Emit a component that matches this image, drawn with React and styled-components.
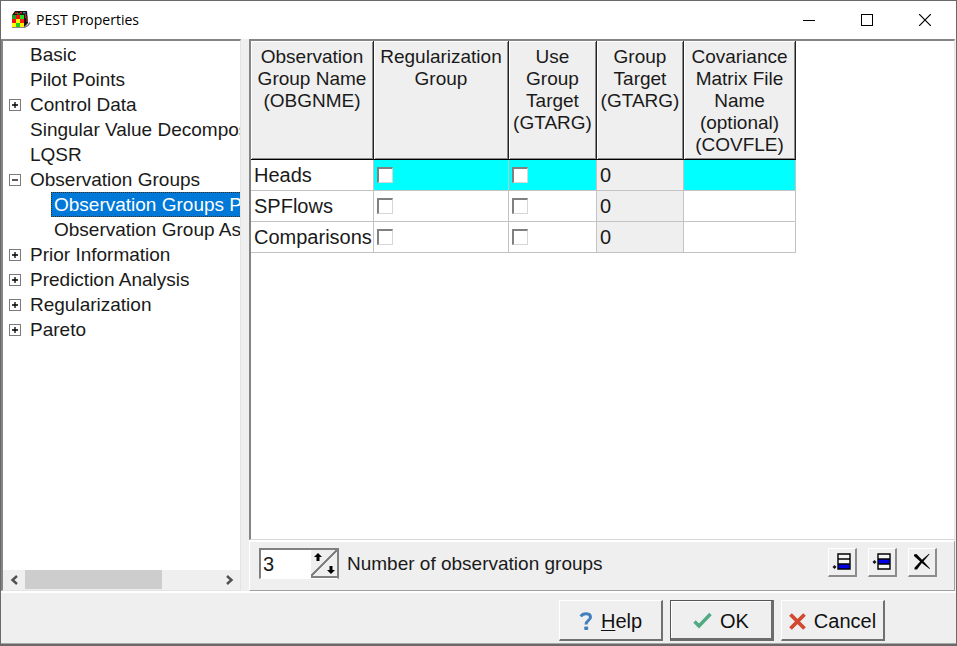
import React from "react";
import styled, { createGlobalStyle } from "styled-components";

const GlobalStyle = createGlobalStyle`
  * { box-sizing: border-box; }
  html, body, #root { height: 100%; margin: 0; }
  body {
    font-family: "Liberation Sans", Arial, sans-serif;
    font-size: 19px;
    color: #1a1a1a;
    background: #efefef;
  }
  button, input { font: inherit; color: inherit; margin: 0; }
  button { cursor: default; }
`;

const Window = styled.main`
  display: flex;
  flex-direction: column;
  height: 100%;
  border: 1px solid #6b6869;
  border-bottom-width: 2px;
  background: #efefef;
`;

const TitleBar = styled.header`
  display: flex;
  align-items: center;
  flex: none;
  height: 38px;
  padding: 0 2px 0 10px;
  background: #fff;
`;

const Title = styled.h1`
  flex: 1;
  margin: 0 0 0 5px;
  font: 400 14px/20px "Open Sans", "Noto Sans", sans-serif;
  color: #000;
`;

const CaptionButton = styled.button`
  display: flex;
  align-items: center;
  justify-content: center;
  width: 58px;
  height: 38px;
  padding: 0;
  border: 0;
  background: transparent;
`;

const Body = styled.div`
  display: grid;
  grid-template-columns: 240px minmax(0, 1fr);
  column-gap: 8px;
  flex: 1;
  min-height: 0;
  padding-right: 1px;
`;

const TreePane = styled.nav`
  display: flex;
  flex-direction: column;
  min-width: 0;
  border: solid;
  border-width: 2px 1px 1px 2px;
  border-color: #858585 #e3e3e3 #e3e3e3 #858585;
  background: #fff;
`;

const TreeList = styled.ul`
  flex: 1;
  margin: 0;
  padding: 1px 0 0;
  overflow: hidden;
  list-style: none;
`;

const TreeRow = styled.li`
  display: flex;
  align-items: center;
  height: 25px;
  padding-left: ${(p) => (p.$level ? 48 : 6)}px;
`;

const ExpanderSlot = styled.span`
  display: flex;
  flex: none;
  width: 18px;
`;

const Expander = styled.button`
  display: flex;
  width: 12px;
  height: 12px;
  padding: 0;
  border: 0;
  background: #fff;
`;

const TreeLink = styled.a`
  flex: ${(p) => (p.$selected ? "1 1 0" : "0 1 auto")};
  min-width: 0;
  height: 25px;
  padding: 0 0 0 2px;
  overflow: hidden;
  line-height: 23px;
  white-space: nowrap;
  text-decoration: none;
  color: ${(p) => (p.$selected ? "#fff" : "#1a1a1a")};
  background: ${(p) => (p.$selected ? "#0078d7" : "transparent")};
  border: 1px dotted ${(p) => (p.$selected ? "#442a10" : "transparent")};
  border-right: 0;
`;

const ScrollBar = styled.div`
  display: flex;
  flex: none;
  height: 20px;
  background: #efefef;
`;

const ScrollButton = styled.button`
  display: flex;
  align-items: center;
  justify-content: center;
  width: 22px;
  padding: 0;
  border: 0;
  background: transparent;
`;

const ScrollTrack = styled.div`
  flex: 1;
`;

const ScrollThumb = styled.div`
  width: 71%;
  height: 19px;
  background: #cdcdcd;
`;

const ContentPane = styled.section`
  display: flex;
  flex-direction: column;
  min-width: 0;
`;

const GridPane = styled.div`
  flex: 1;
  min-height: 0;
  overflow: hidden;
  border: solid;
  border-width: 2px 1px 1px 2px;
  border-color: #858585 #e3e3e3 #d8d8d8 #858585;
  background: #fff;
`;

const GroupTable = styled.table`
  width: 545px;
  table-layout: fixed;
  border-collapse: separate;
  border-spacing: 0;
`;

const Column = styled.col`
  width: ${(p) => p.$width}px;
`;

const HeaderCell = styled.th`
  height: 119px;
  padding: 5px 0 0;
  vertical-align: top;
  font-weight: 400;
  line-height: 22px;
  background: #efefef;
  border-right: 1px solid #222;
  border-bottom: 1px solid #000;
  box-shadow: inset 1px 1px #fff, inset -1px -1px #8a8a8a;
`;

const HeaderLine = styled.span`
  display: block;
  white-space: nowrap;
`;

const cellColor = (p) => (p.$readOnly ? "#efefef" : p.$active ? "#00ffff" : "#fff");

const Cell = styled.td`
  height: 31px;
  padding: 0 0 0 3px;
  font-size: 20px;
  line-height: 22px;
  text-align: left;
  background: ${cellColor};
  border-right: 1px solid #c3c3c3;
  border-bottom: 1px solid #c3c3c3;
`;

const CheckBox = styled.input`
  display: block;
  appearance: none;
  width: 16px;
  height: 16px;
  background: #fff;
  border: solid;
  border-width: 2px 1px 1px 2px;
  border-color: #808080 #d6d6d6 #d6d6d6 #808080;
`;

const CellInput = styled.input`
  display: block;
  width: 100%;
  padding: 0;
  border: 0;
  outline: 0;
  background: transparent;
`;

const CountBar = styled.div`
  display: flex;
  align-items: flex-start;
  flex: none;
  height: 51px;
  padding: 6px 17px 0 9px;
  border: solid;
  border-width: 2px 1px 1px 1px;
  border-color: #fff #a0a0a0 #a0a0a0 #fff;
`;

const SpinEdit = styled.div`
  display: flex;
  width: 80px;
  height: 31px;
  border: solid;
  border-width: 2px 2px 1px 2px;
  border-color: #808080 #808080 #fff #808080;
  background: #fff;
`;

const SpinInput = styled.input`
  flex: 1;
  min-width: 0;
  padding: 0 0 0 2px;
  font-size: 20px;
  border: 0;
  outline: 0;
  background: #fff;
`;

const SpinPad = styled.div`
  display: flex;
  flex-direction: column;
  width: 26px;
  border-bottom: 2px solid #808080;
  background: linear-gradient(to bottom right, #efefef 47%, #808080 48%, #808080 52%, #efefef 53%);
`;

const SpinButton = styled.button`
  display: flex;
  align-items: center;
  align-self: ${(p) => (p.$down ? "flex-end" : "flex-start")};
  justify-content: center;
  width: 13px;
  height: 13px;
  padding: 0;
  border: 0;
  background: transparent;
`;

const CountLabel = styled.label`
  flex: 1;
  margin-left: 8px;
  line-height: 32px;
`;

const ToolButtons = styled.div`
  display: flex;
  gap: 11px;
`;

const ToolButton = styled.button`
  display: flex;
  align-items: center;
  justify-content: center;
  width: 29px;
  height: 29px;
  padding: 0;
  background: #efefef;
  border: solid;
  border-width: 1px 2px 2px 1px;
  border-color: #fff #8c8c8c #8c8c8c #fff;
`;

const Footer = styled.footer`
  display: flex;
  justify-content: flex-end;
  flex: none;
  gap: 7px;
  height: 53px;
  padding: 7px 71px 0 0;
  border-top: 2px solid #fff;
  border-bottom: 1px solid #a8a8a8;
`;

const DialogButton = styled.button`
  display: flex;
  align-items: center;
  justify-content: center;
  gap: 8px;
  width: 104px;
  height: 41px;
  padding: 2px 0 0;
  font-size: 20px;
  line-height: 22px;
  color: #111;
  background: #efefef;
  border: solid;
  border-width: ${(p) => (p.$primary ? "1px 3px 3px 1px" : "1px 2px 2px 1px")};
  border-color: ${(p) => (p.$primary ? "#555 #6c6c6c #6c6c6c #555" : "#fff #707070 #707070 #fff")};
  box-shadow: ${(p) => (p.$primary ? "inset 1px 1px #fff" : "none")};
`;

const ButtonText = styled.span`
  white-space: pre;
`;

const Mnemonic = styled.span`
  text-decoration: underline;
  text-decoration-thickness: 1px;
  text-underline-offset: 2px;
`;

const AppIcon = () => (
  <svg width="20" height="18" viewBox="0 0 20 18" aria-hidden="true">
    <path d="M4 0H16L17 12L13 16.500H1V4z" fill="#1a1410" />
    <path d="M4 1.500h3v1.500H4zM9 1h2v1.500H9z" fill="#e02020" />
    <path d="M6 2.500h3v1H6z" fill="#22c522" />
    <path d="M12 1h2.500v1.500H12z" fill="#3088a8" />
    <path d="M1 4h4v4H1z" fill="#20a020" />
    <path d="M5 4h4v4H5z" fill="#f01010" />
    <path d="M9 4h4v4H9z" fill="#20e020" />
    <path d="M1 8h4v4H1z" fill="#f01010" />
    <path d="M5 8h4v4H5z" fill="#ffff00" />
    <path d="M9 8h4v4H9z" fill="#ff2010" />
    <path d="M1 12h4v4H1z" fill="#ffff00" />
    <path d="M5 12h4v4H5z" fill="#20d020" />
    <path d="M9 12h4v4H9z" fill="#ffee00" />
    <path d="M14 3h1v4h-1zM15.500 5h1v6h-1z" fill="#a33030" />
    <path d="M13 16.500L17 14.500L19 11.500" fill="none" stroke="#808080" strokeWidth="1.500" />
  </svg>
);

const MinimizeIcon = () => (
  <svg width="12" height="12" aria-hidden="true">
    <path d="M0 6.5H12" stroke="#000" />
  </svg>
);

const MaximizeIcon = () => (
  <svg width="12" height="12" aria-hidden="true">
    <rect x=".5" y=".5" width="11" height="11" fill="none" stroke="#000" />
  </svg>
);

const CloseIcon = () => (
  <svg width="12" height="12" aria-hidden="true">
    <path d="M0 0L12 12M12 0L0 12" stroke="#000" strokeWidth="1.2" />
  </svg>
);

const ExpanderIcon = ({ open }) => (
  <svg width="12" height="12" aria-hidden="true">
    <rect x=".5" y=".5" width="11" height="11" fill="#fff" stroke="#7b7b7b" />
    <path d={open ? "M3 6H9" : "M3 6H9M6 3V9"} stroke="#000" strokeWidth="1.3" />
  </svg>
);

const ChevronIcon = ({ right }) => (
  <svg width="9" height="10" aria-hidden="true">
    <path d={right ? "M2 1L6.5 5L2 9" : "M7 1L2.5 5L7 9"} fill="none" stroke="#505050" strokeWidth="2.4" />
  </svg>
);

const SpinArrow = ({ down }) => (
  <svg width="8" height="8" aria-hidden="true">
    <path d={down ? "M2.5 0h3v4H8L4 8L0 4h2.5z" : "M2.5 8h3V4H8L4 0L0 4h2.5z"} fill="#000" />
  </svg>
);

const RowIcon = ({ fillTop, markerTop }) => (
  <svg width="20" height="18" aria-hidden="true">
    <rect x="6" y="1" width="12" height="15" fill="#f4f4f4" />
    <rect x="6" y={fillTop} width="12" height="5" fill="#0000e8" />
    <path d="M6 1H18V16H6zM6 6H18M6 11H18" fill="none" stroke="#000" strokeWidth="1.4" />
    <path d={`M2.5 ${markerTop}l2 2l-2 2l-2-2z`} fill="#111" />
  </svg>
);

const DeleteRowIcon = () => (
  <svg width="18" height="18" aria-hidden="true">
    <path d="M1 1.5L3.5 1L9 6.8L16 0.8L16.5 1.2L10.5 8.300L17 15.500L16.500 16L8.800 10L4 16.500L1.500 16.500L1.500 14.800L7.200 8.600L1 3z" fill="#050505" />
  </svg>
);

const HelpIcon = () => (
  <svg width="14" height="19" aria-hidden="true">
    <path d="M1.8 4.5C4 .8 11.500 .8 11.500 5.300C11.500 8.500 7 8.500 7 12.500" fill="none" stroke="#4480be" strokeWidth="3" />
    <rect x="5.200" y="14.500" width="4" height="3.500" rx="1" fill="#4480be" />
  </svg>
);

const CheckIcon = () => (
  <svg width="19" height="17" aria-hidden="true">
    <path d="M1.500 9.500L6 14L17.500 2" fill="none" stroke="#50ab83" strokeWidth="3.400" />
  </svg>
);

const CrossIcon = () => (
  <svg width="17" height="17" aria-hidden="true">
    <path d="M1.500 1.500L15.500 15.500M15.500 1.500L1.500 15.500" stroke="#d1492e" strokeWidth="3.800" />
  </svg>
);

const TREE = [
  { text: "Basic" },
  { text: "Pilot Points" },
  { text: "Control Data", state: "closed" },
  { text: "Singular Value Decomposition" },
  { text: "LQSR" },
  { text: "Observation Groups", state: "open" },
  { text: "Observation Groups Properties", level: 1, selected: true },
  { text: "Observation Group Assignments", level: 1 },
  { text: "Prior Information", state: "closed" },
  { text: "Prediction Analysis", state: "closed" },
  { text: "Regularization", state: "closed" },
  { text: "Pareto", state: "closed" },
];

const COLUMNS = [
  { width: 123, lines: ["Observation", "Group Name", "(OBGNME)"] },
  { width: 135, lines: ["Regularization", "Group"] },
  { width: 88, lines: ["Use", "Group", "Target", "(GTARG)"] },
  { width: 87, lines: ["Group", "Target", "(GTARG)"] },
  { width: 112, lines: ["Covariance", "Matrix File", "Name", "(optional)", "(COVFLE)"] },
];

const GROUPS = [
  { name: "Heads", target: "0", active: true },
  { name: "SPFlows", target: "0" },
  { name: "Comparisons", target: "0" },
];

export default function App() {
  return (
    <>
      <GlobalStyle />
      <Window>
        <TitleBar>
          <AppIcon />
          <Title>PEST Properties</Title>
          <CaptionButton aria-label="Minimize"><MinimizeIcon /></CaptionButton>
          <CaptionButton aria-label="Maximize"><MaximizeIcon /></CaptionButton>
          <CaptionButton aria-label="Close"><CloseIcon /></CaptionButton>
        </TitleBar>

        <Body>
          <TreePane aria-label="Property pages">
            <TreeList>
              {TREE.map((item) => (
                <TreeRow key={item.text} $level={item.level}>
                  {!item.level && (
                    <ExpanderSlot>
                      {item.state && (
                        <Expander aria-label={`Toggle ${item.text}`} aria-expanded={item.state === "open"}>
                          <ExpanderIcon open={item.state === "open"} />
                        </Expander>
                      )}
                    </ExpanderSlot>
                  )}
                  <TreeLink href="#" $selected={item.selected} aria-current={item.selected ? "page" : undefined}>
                    {item.text}
                  </TreeLink>
                </TreeRow>
              ))}
            </TreeList>
            <ScrollBar>
              <ScrollButton aria-label="Scroll left"><ChevronIcon /></ScrollButton>
              <ScrollTrack><ScrollThumb /></ScrollTrack>
              <ScrollButton aria-label="Scroll right"><ChevronIcon right /></ScrollButton>
            </ScrollBar>
          </TreePane>

          <ContentPane>
            <GridPane>
              <GroupTable>
                <colgroup>
                  {COLUMNS.map((c, i) => <Column key={i} $width={c.width} />)}
                </colgroup>
                <thead>
                  <tr>
                    {COLUMNS.map((c, i) => (
                      <HeaderCell key={i} scope="col">
                        {c.lines.map((line) => <HeaderLine key={line}>{line}</HeaderLine>)}
                      </HeaderCell>
                    ))}
                  </tr>
                </thead>
                <tbody>
                  {GROUPS.map((g) => (
                    <tr key={g.name}>
                      <Cell>{g.name}</Cell>
                      <Cell $active={g.active}>
                        <CheckBox type="checkbox" aria-label={`${g.name} regularization group`} />
                      </Cell>
                      <Cell $active={g.active}>
                        <CheckBox type="checkbox" aria-label={`${g.name} use group target`} />
                      </Cell>
                      <Cell $readOnly>{g.target}</Cell>
                      <Cell $active={g.active}>
                        <CellInput type="text" aria-label={`${g.name} covariance matrix file name`} />
                      </Cell>
                    </tr>
                  ))}
                </tbody>
              </GroupTable>
            </GridPane>

            <CountBar>
              <SpinEdit>
                <SpinInput id="group-count" type="text" defaultValue="3" />
                <SpinPad>
                  <SpinButton aria-label="Increase"><SpinArrow /></SpinButton>
                  <SpinButton $down aria-label="Decrease"><SpinArrow down /></SpinButton>
                </SpinPad>
              </SpinEdit>
              <CountLabel htmlFor="group-count">Number of observation groups</CountLabel>
              <ToolButtons>
                <ToolButton aria-label="Add row"><RowIcon fillTop={11} markerTop={12} /></ToolButton>
                <ToolButton aria-label="Insert row"><RowIcon fillTop={6} markerTop={7} /></ToolButton>
                <ToolButton aria-label="Delete row"><DeleteRowIcon /></ToolButton>
              </ToolButtons>
            </CountBar>
          </ContentPane>
        </Body>

        <Footer>
          <DialogButton>
            <HelpIcon />
            <ButtonText><Mnemonic>H</Mnemonic>elp</ButtonText>
          </DialogButton>
          <DialogButton $primary>
            <CheckIcon />
            <ButtonText>OK</ButtonText>
          </DialogButton>
          <DialogButton>
            <CrossIcon />
            <ButtonText>Cancel</ButtonText>
          </DialogButton>
        </Footer>
      </Window>
    </>
  );
}
